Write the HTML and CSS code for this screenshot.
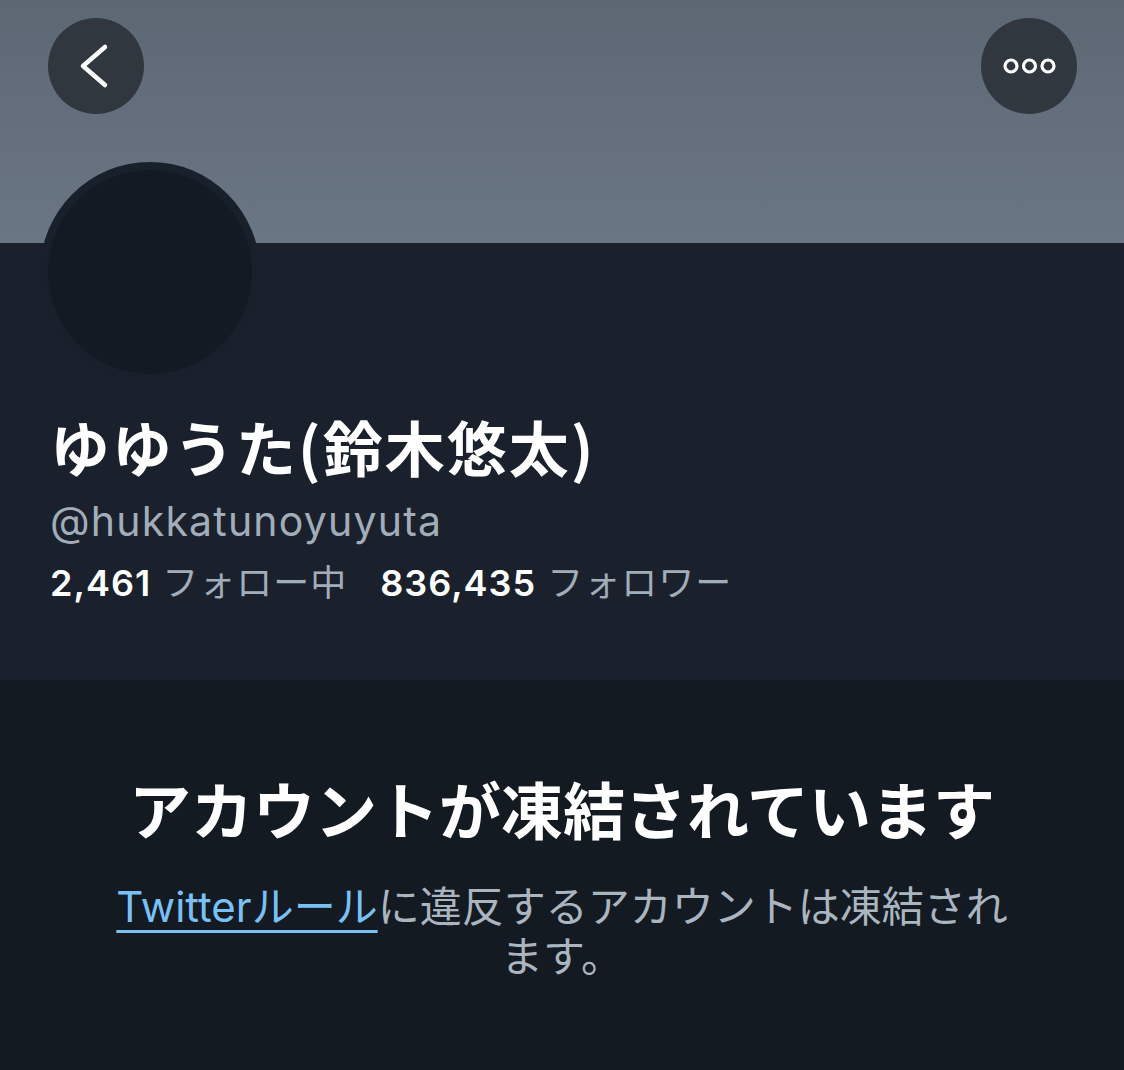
FILE: index.html
```html
<!DOCTYPE html>
<html lang="ja">
<head>
<meta charset="utf-8">
<link rel="stylesheet" href="styles.css">
</head>
<body>
<div class="page">
  <header class="banner">
    <button class="circle-btn" aria-label="戻る">
      <svg width="96" height="96" viewBox="0 0 96 96"><path d="M57 29 L35 48 L57 67" fill="none" stroke="#fff" stroke-width="4.5" stroke-linecap="round" stroke-linejoin="round"/></svg>
    </button>
    <button class="circle-btn" aria-label="その他">
      <svg width="96" height="96" viewBox="0 0 96 96"><g fill="none" stroke="#fff" stroke-width="3.2"><circle cx="30" cy="48" r="6"/><circle cx="48.5" cy="48" r="6"/><circle cx="67" cy="48" r="6"/></g></svg>
    </button>
  </header>
  <section class="profile">
    <div class="avatar"><div class="avatar-inner"></div></div>
    <h1 class="name">ゆゆうた(鈴木悠太)</h1>
    <div class="handle">@hukkatunoyuyuta</div>
    <div class="stats">
      <span class="stat"><b>2,461</b> フォロー中</span>
      <span class="stat"><b>836,435</b> フォロワー</span>
    </div>
  </section>
  <section class="suspended">
    <h2 class="title">アカウントが凍結されています</h2>
    <p class="desc"><a class="link" href="#">Twitterルール</a>に違反するアカウントは凍結されます。</p>
  </section>
</div>
</body>
</html>
```
FILE: styles.css
```css
* { box-sizing: border-box; }
html, body { margin: 0; padding: 0; background: #141a22; }
body { font-family: "Inter", "Noto Sans CJK JP", sans-serif; }
.page { width: 1124px; height: 1070px; overflow: hidden; display: flex; flex-direction: column; }
.banner {
  height: 243px;
  background: linear-gradient(180deg, #5d6774 0%, #6b7685 100%);
  display: flex;
  justify-content: space-between;
  align-items: flex-start;
  padding: 18px 47px 0 48px;
  flex: none;
}
.circle-btn {
  width: 96px; height: 96px; border-radius: 50%;
  background: #31373f; border: none; padding: 0; margin: 0;
  display: block;
}
.circle-btn svg { display: block; }
.profile {
  background: #1a212c;
  height: 437px;
  flex: none;
  padding: 0 0 0 40px;
}
.avatar {
  width: 220px; height: 220px; border-radius: 50%;
  background: #18202b;
  margin-top: -81px;
  padding: 8px;
  display: flex; align-items: flex-end;
}
.avatar-inner {
  width: 204px; height: 204px; border-radius: 50%;
  background: #131a24;
  margin-top: 3px;
}
.name {
  margin: 28px 0 0 10px;
  font-family: "Noto Sans CJK JP", sans-serif;
  font-weight: 700;
  font-size: 60px;
  line-height: 72px;
  color: #ffffff;
  letter-spacing: 2px;
}
.handle {
  margin: 12px 0 0 10px;
  font-size: 41px;
  line-height: 54px;
  letter-spacing: 1.2px;
  color: #a1adb9;
}
.stats {
  margin: 12px 0 0 10px;
  display: flex;
  gap: 33px;
  font-size: 36px;
  line-height: 46px;
  color: #a1adb9;
  letter-spacing: 1px;
  font-family: "Inter", "Noto Sans CJK JP", sans-serif;
}
.stat b { color: #fff; font-weight: 600; }
.suspended {
  flex: 1;
  background: #141a22;
  text-align: center;
  padding: 86px 100px 0;
}
.title {
  margin: 0;
  font-family: "Noto Sans CJK JP", sans-serif;
  font-weight: 700;
  font-size: 62px;
  line-height: 84px;
  color: #fff;
}
.desc {
  margin: 32px 0 0;
  font-size: 42px;
  line-height: 50px;
  color: #aab5c0;
  font-family: "Inter", "Noto Sans CJK JP", sans-serif;
}
.link {
  color: #79c0f5;
  text-decoration: underline;
  text-decoration-thickness: 3px;
  text-underline-offset: 8px;
}
```
